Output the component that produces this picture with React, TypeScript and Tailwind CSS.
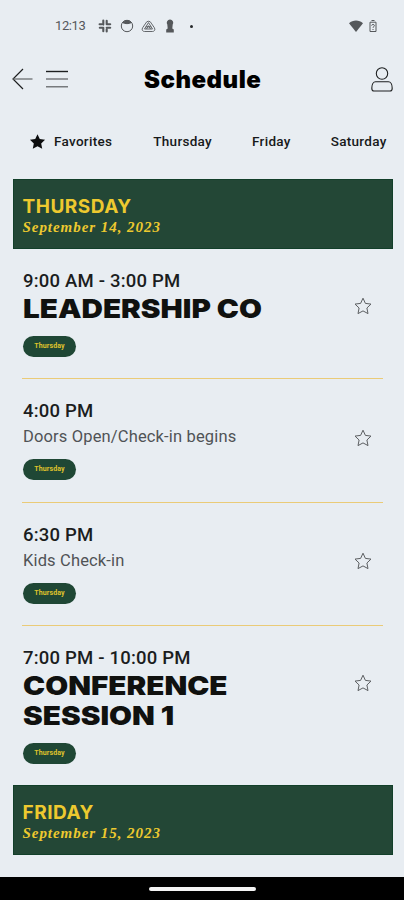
import React from 'react';

interface Session {
  id: number;
  time: string;
  title: string;
  featured: boolean;
  day: string;
}

const tabs = [
  { label: 'Thursday', className: 'ml-[41px]' },
  { label: 'Friday', className: 'ml-[40px]' },
  { label: 'Saturday', className: 'ml-[40px]' },
];

const sessions: Session[] = [
  { id: 1, time: '9:00 AM - 3:00 PM', title: 'LEADERSHIP CO', featured: true, day: 'Thursday' },
  { id: 2, time: '4:00 PM', title: 'Doors Open/Check-in begins', featured: false, day: 'Thursday' },
  { id: 3, time: '6:30 PM', title: 'Kids Check-in', featured: false, day: 'Thursday' },
  { id: 4, time: '7:00 PM - 10:00 PM', title: 'CONFERENCE SESSION 1', featured: true, day: 'Thursday' },
];

const starPath = 'M9 1.2l2.4 5.2 5.6.7-4.1 3.9 1.1 5.6L9 13.9l-5 2.7 1.1-5.6L1 7.1l5.6-.7z';

function StatusBar() {
  return (
    <div className="flex h-[52px] items-center pl-[55px] pr-[26px] text-[#55585b]">
      <span className="w-[31px] whitespace-nowrap text-[13px] tracking-[-0.4px]">12:13</span>
      <svg className="ml-3 h-[14px] w-[14px]" viewBox="0 0 14 14" fill="none" stroke="currentColor" strokeWidth="2.1" strokeLinecap="round">
        <path d="M5.3 1.6v4M8.7 5.3V1.8M1.6 5.3h2M8.7 5.3h3.5M5.3 8.7H1.8M5.3 8.7v3.5M8.7 8.7h3.5M8.7 10.6v1.8" />
      </svg>
      <svg className="ml-2 h-[14px] w-[14px]" viewBox="0 0 14 14" fill="none" stroke="currentColor">
        <circle cx="7" cy="7" r="5.7" />
        <path d="M2.7 3.6C4 1 10 1 11.3 3.6 9.5 5 4.5 5 2.7 3.6z" fill="currentColor" />
      </svg>
      <svg className="ml-[7px] h-[14px] w-[15px]" viewBox="0 0 15 14" fill="none" stroke="currentColor" strokeWidth="0.9">
        <path d="M4.8 4.1a2.9 2.9 0 0 1 5.4 0l3.2 4.7c1.2 2-.1 3.7-2 3.7H3.6c-1.9 0-3.2-1.7-2-3.7z" />
        <path d="M7.5 3.6L3.5 10h8zM4.8 7.8h5.4M5.5 10l2-3.3 2 3.3" />
      </svg>
      <svg className="ml-[9px] h-[14px] w-[10px]" viewBox="0 0 10 14" fill="currentColor">
        <path d="M5 .5a3.2 3.2 0 0 1 2.7 5L7.3 9.5l1.5 1v3H1.2v-3l1.5-1L2.3 5.5A3.2 3.2 0 0 1 5 .5z" />
      </svg>
      <span className="ml-[15px] h-[3px] w-[3px] rounded-full bg-[#26282a]" />
      <svg className="ml-auto h-[12px] w-[14px]" viewBox="0 0 14 12" fill="currentColor">
        <path d="M7 12L0 3.2C3.8-.3 10.2-.3 14 3.2z" />
      </svg>
      <svg className="mr-px ml-[6px] h-[14px] w-[8px]" viewBox="0 0 8 14" fill="none" stroke="currentColor">
        <path d="M2.5 1.5h3M1 3.2h6v9.3H1zM1 12.5h2M5 12.5h2" />
        <path d="M2.6 6.6c.2-1.6 2.8-1.5 2.8 0 0 1-1.4 1-1.4 2.2M4 10v1" />
      </svg>
    </div>
  );
}

function Header() {
  return (
    <header className="flex h-[54px] items-center pl-3 pr-[11px] text-[#1d1f20]">
      <svg className="h-[22px] w-[21px]" viewBox="0 0 21 22" fill="none" stroke="currentColor" strokeWidth="1.2">
        <path d="M11 1L1 11l10 10" />
        <path d="M1 11h19.5" stroke="#606366" />
      </svg>
      <svg className="ml-[13px] h-[18px] w-[22px]" viewBox="0 0 22 18" fill="none" stroke="currentColor" strokeWidth="1.4">
        <path d="M0 1.5h22" />
        <path d="M0 9h22M0 16.8h22" stroke="#777a7d" />
      </svg>
      <h1 className="ml-[76px] w-[122px] whitespace-nowrap pt-0.5 font-['Inter'] text-[24px] font-black leading-[30px] tracking-[0.5px] text-black">
        Schedule
      </h1>
      <svg className="ml-auto h-[25px] w-[22px]" viewBox="0 0 22 25" fill="none" stroke="currentColor" strokeWidth="1.1">
        <circle cx="11" cy="6.5" r="5.7" />
        <path d="M4.6 14.8h12.8c2.2 0 3.8 2.8 3.8 6.4 0 1.7-.8 2.8-2.2 2.8H3C1.6 24 .8 22.9.8 21.2c0-3.6 1.6-6.4 3.8-6.4z" />
      </svg>
    </header>
  );
}

function DayTabs() {
  return (
    <nav className="flex h-[73px] items-center overflow-hidden whitespace-nowrap pb-0.5 pl-[29px] text-[13.5px] font-medium tracking-[0.3px] text-[#17191a]">
      <svg className="h-[17px] w-[17px]" viewBox="0 0 18 18" fill="#0c0d0e">
        <path d={starPath} />
      </svg>
      <span className="ml-2">Favorites</span>
      {tabs.map((tab) => (
        <span key={tab.label} className={tab.className}>
          {tab.label}
        </span>
      ))}
    </nav>
  );
}

function DayBanner({ day, date }: { day: string; date: string }) {
  return (
    <div className="mr-[11.5px] ml-[12.5px] h-[70px] border border-[#123f2a] bg-[#234736] pl-[9px] pt-[14px] text-[#edc92f]">
      <div className="font-['Inter'] text-[19px] font-bold leading-[25px] tracking-[0.5px]">{day}</div>
      <div className="font-['Liberation_Serif'] text-[15px] font-bold italic leading-[17px] tracking-[0.95px]">{date}</div>
    </div>
  );
}

function SessionItem({ session, last }: { session: Session; last: boolean }) {
  return (
    <div
      className={`mr-[21px] ml-[22px] flex items-center justify-between pb-[21.5px] ${
        last ? '' : 'border-b border-b-[#eacb78]'
      } ${session.featured ? 'pt-[19.5px]' : 'pt-5'}`}
    >
      <div className="w-[270px] pl-px">
        <div className="whitespace-nowrap text-[18.5px] font-medium leading-6 tracking-[0.2px] text-[#1b1d1e]">
          {session.time}
        </div>
        {session.featured ? (
          <div className="mt-px w-[215px] origin-left scale-x-[1.14] font-['Inter'] text-[26px] font-black leading-[30px] text-[#10110f]">
            {session.title}
          </div>
        ) : (
          <div className="mt-0.5 whitespace-nowrap text-[16.5px] leading-6 tracking-[0.15px] text-[#505356]">
            {session.title}
          </div>
        )}
        <div
          className={`flex h-[21px] w-[53px] items-center justify-center rounded-full bg-[#1f4735] text-[7px] font-bold tracking-[0.1px] text-[#dfc22c] ${
            session.featured ? 'mt-3' : 'mt-[10px]'
          }`}
        >
          {session.day}
        </div>
      </div>
      <svg
        className={`mr-[11px] h-[18px] w-[18px] ${last ? '-translate-y-[22px]' : session.featured ? '-translate-y-[7px]' : '-translate-y-[2px]'}`}
        viewBox="0 0 18 18"
        fill="none"
        stroke="#5c5f62"
        strokeLinejoin="round"
      >
        <path d={starPath} />
      </svg>
    </div>
  );
}

export default function App() {
  return (
    <div className="flex h-[900px] w-[404px] flex-col overflow-hidden bg-[#e8edf2] font-['Roboto',sans-serif]">
      <StatusBar />
      <Header />
      <DayTabs />
      <main className="flex-1">
        <DayBanner day="THURSDAY" date="September 14, 2023" />
        {sessions.map((session, i) => (
          <SessionItem key={session.id} session={session} last={i === sessions.length - 1} />
        ))}
        <DayBanner day="FRIDAY" date="September 15, 2023" />
      </main>
      <div className="flex h-[23px] items-center justify-center bg-black">
        <div className="h-1 w-[107px] rounded-full bg-[#f4f4f4]" />
      </div>
    </div>
  );
}
